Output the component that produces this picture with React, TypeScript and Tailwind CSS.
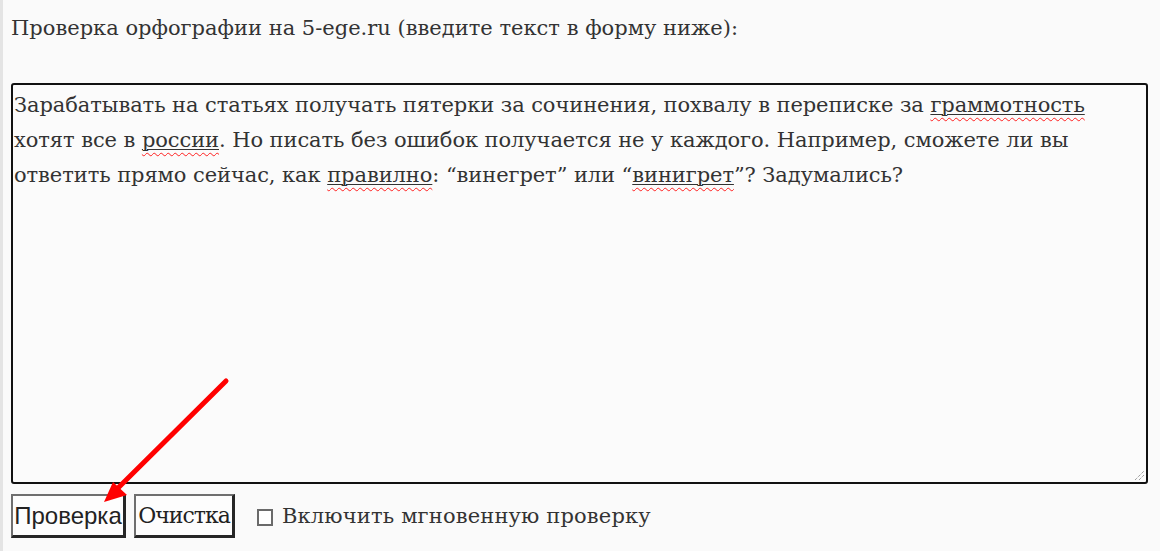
import React from "react";

const serif = { fontFamily: '"DejaVu Serif", "Liberation Serif", serif' };

function Err({ children }: { children: React.ReactNode }) {
  return (
    <span className="underline decoration-wavy decoration-[#ff2020] decoration-1 underline-offset-[5px]">
      <span className="underline decoration-solid decoration-[#333] decoration-1 underline-offset-[2px]">{children}</span>
    </span>
  );
}

export default function App() {
  return (
    <div className="relative min-h-[551px] bg-[#fafafa] border-l-[3px] border-[#e4e4e4] pl-[8px] pr-[12px] pt-[11px] text-[#333]" style={serif}>
      <p className="text-[21px] leading-[35px] whitespace-nowrap">Проверка орфографии на 5-ege.ru (введите текст в форму ниже):</p>
      <div className="relative mt-[37px] w-[1137px] h-[401px] border-2 border-[#111] rounded-[3px] bg-[#fbfbfb] pl-[1px] pt-[3px] text-[21px] leading-[35px] tracking-[-0.08px]">
        <div className="whitespace-nowrap">Зарабатывать на статьях получать пятерки за сочинения, похвалу в переписке за <Err>граммотность</Err></div>
        <div className="whitespace-nowrap">хотят все в <Err>россии</Err>. Но писать без ошибок получается не у каждого. Например, сможете ли вы</div>
        <div className="whitespace-nowrap">ответить прямо сейчас, как <Err>правилно</Err>: “винегрет” или “<Err>винигрет</Err>”? Задумались?</div>
        <svg className="absolute right-[1px] bottom-[1px]" width="11" height="11" viewBox="0 0 11 11">
          <line x1="1" y1="10" x2="10" y2="1" stroke="#777" strokeWidth="1" strokeDasharray="1 1" />
          <line x1="5" y1="10" x2="10" y2="5" stroke="#777" strokeWidth="1" strokeDasharray="1 1" />
        </svg>
      </div>
      <div className="mt-[10px] flex items-center">
        <button
          className="w-[115px] h-[44px] bg-[#fdfdfd] border-2 border-r-[3px] border-b-[3px] border-t-[#6f6f6f] border-l-[#6f6f6f] border-r-[#262626] border-b-[#262626] text-[24px] text-[#222] flex items-center justify-center"
          style={{ fontFamily: '"Liberation Sans", Arial, sans-serif' }}
        >
          Проверка
        </button>
        <button
          className="ml-[8px] w-[101px] h-[44px] bg-[#fdfdfd] border-2 border-r-[3px] border-b-[3px] border-t-[#6f6f6f] border-l-[#6f6f6f] border-r-[#262626] border-b-[#262626] text-[22px] tracking-[-1px] text-[#222] flex items-center justify-center"
          style={serif}
        >
          Очистка
        </button>
        <label className="ml-[22px] mt-[2px] flex items-center text-[21px] tracking-[0.15px]">
          <span className="w-[16px] h-[17px] border-2 border-[#6a6a6a] bg-white mr-[9px]" />
          <span>Включить мгновенную проверку</span>
        </label>
      </div>
      <svg className="absolute left-0 top-0 pointer-events-none" width="1160" height="551" viewBox="0 0 1160 551">
        <line x1="223" y1="381" x2="114" y2="489" stroke="#ff0000" strokeWidth="5" strokeLinecap="round" />
        <polygon points="101,502 110,482 124,495" fill="#ff0000" />
      </svg>
    </div>
  );
}
